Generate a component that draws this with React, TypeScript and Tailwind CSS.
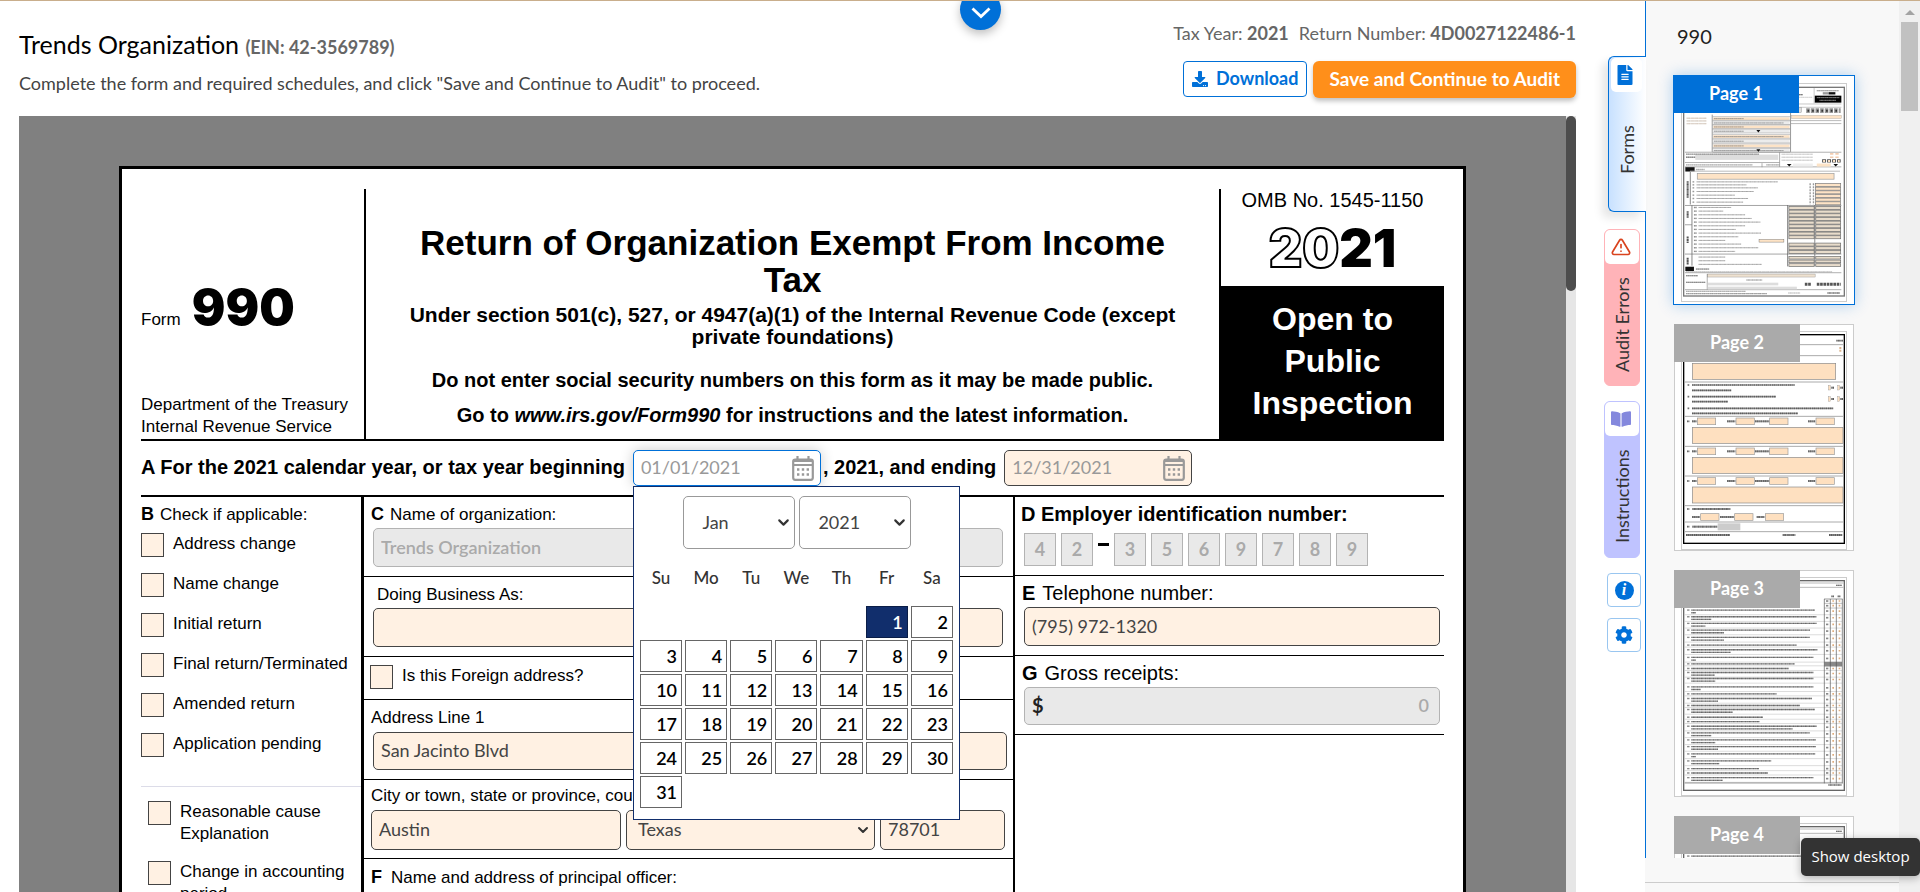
import React from "react";
import { ChevronDown } from "lucide-react";
import { FaDownload, FaCog, FaFileAlt, FaBookOpen } from "react-icons/fa";
import { FiAlertTriangle } from "react-icons/fi";

const sans = "font-['Liberation_Sans',Arial,sans-serif]";
const ui = "font-['Lato',sans-serif]";

function CalendarIcon() {
  return (
    <svg viewBox="0 0 22 25" className="h-[25px] w-[22px] shrink-0" fill="none" stroke="#999" aria-hidden="true">
      <rect x="1.2" y="3.5" width="19.6" height="20.3" rx="2" strokeWidth="2.2" />
      <path d="M1 5h20M1 9h20" strokeWidth="1.8" />
      <path d="M5.5 0v4M16.5 0v4" strokeWidth="2.2" />
      <path d="M5 13.5h12M5 18.5h12" strokeWidth="2.4" strokeDasharray="2.4 2.4" />
    </svg>
  );
}

function DateField({ label, value, active }: { label: string; value: string; active?: boolean }) {
  return (
    <div
      className={
        "flex h-9 w-[188px] items-center rounded-[5px] border pr-1.5 pl-[7px] " +
        (active ? "border-[#0070d8] bg-white shadow-[0_0_14px_rgba(0,0,0,0.2)]" : "border-[#444] bg-[#fff1e3]")
      }
    >
      <input
        aria-label={label}
        defaultValue={value}
        className={ui + " w-full min-w-0 bg-transparent pb-[2px] text-[18px] font-normal text-[#999] outline-none"}
      />
      <CalendarIcon />
    </div>
  );
}

const weekdays = ["Su", "Mo", "Tu", "We", "Th", "Fr", "Sa"];
const weeks: (number | null)[][] = [
  [null, null, null, null, null, 1, 2],
  [3, 4, 5, 6, 7, 8, 9],
  [10, 11, 12, 13, 14, 15, 16],
  [17, 18, 19, 20, 21, 22, 23],
  [24, 25, 26, 27, 28, 29, 30],
  [31, null, null, null, null, null, null],
];

function PickerSelect({ label, value }: { label: string; value: string }) {
  return (
    <div className="relative">
      <select
        aria-label={label}
        className="h-[53px] w-28 appearance-none rounded-[5px] border border-[#999] bg-white pl-[18px] text-[18px] font-normal text-[#444]"
      >
        <option>{value}</option>
      </select>
      <ChevronDown className="pointer-events-none absolute top-[18px] right-[3px] size-[17px] text-[#333]" strokeWidth={3} />
    </div>
  );
}

function DatePicker() {
  return (
    <div className={ui + " absolute top-9 left-0 z-10 h-[334px] w-[327px] border border-[#112e6c] bg-white px-[3px] pt-[9px]"}>
      <div className="flex justify-center gap-1 pl-[2px]">
        <PickerSelect label="Month" value="Jan" />
        <PickerSelect label="Year" value="2021" />
      </div>
      <table className="mt-[9px] w-full table-fixed border-separate border-spacing-x-[3px] border-spacing-y-[2px]">
        <thead>
          <tr>
            {weekdays.map((d) => (
              <th key={d} className="h-11 pb-2 text-center text-[17px] font-medium text-[#333]">
                {d}
              </th>
            ))}
          </tr>
        </thead>
        <tbody>
          {weeks.map((week, i) => (
            <tr key={i}>
              {week.map((day, j) => (
                <td key={j} className="h-8 p-0">
                  {day !== null && (
                    <button
                      className={
                        "block h-8 w-full border pr-1 text-right text-[18px] leading-[28px] font-semibold " +
                        (day === 1 ? "border-[#0a1d47] bg-[#112e6c] text-white" : "border-[#666] bg-white text-black")
                      }
                    >
                      {day}
                    </button>
                  )}
                </td>
              ))}
            </tr>
          ))}
        </tbody>
      </table>
    </div>
  );
}

function Check({ label }: { label: string }) {
  return (
    <label className="flex items-start gap-[9px] text-[17px] leading-[22px]">
      <input
        type="checkbox"
        className="h-6 w-[23px] shrink-0 appearance-none border border-[#444] bg-[#fff1e3] checked:bg-[#0070d8]"
      />
      <span>{label}</span>
    </label>
  );
}

const box = ui + " rounded-[5px] border px-[7px] pb-[2px] text-[18px] ";
const editable = box + "border-[#444] bg-[#fff1e3] text-[#444]";
const locked = box + "border-[#b3b3b3] bg-[#e9e9e9] font-semibold text-[#aaa]";

const changes = [
  "Address change",
  "Name change",
  "Initial return",
  "Final return/Terminated",
  "Amended return",
  "Application pending",
];

function FormSheet() {
  return (
    <div className={sans + " mx-[100px] mt-[50px] border-[3px] border-black bg-white px-[19px] pt-5 text-black"}>
      <div className="grid h-[252px] grid-cols-[225px_1fr_225px] border-b-2 border-black">
        <div className="flex flex-col justify-between border-r-2 border-black">
          <div className="flex items-baseline gap-[9px] pt-[86px]">
            <span className="text-[17px]">Form</span>
            <span className="pl-[2px] font-['Inter',sans-serif] text-[50px] leading-[64px] font-black">990</span>
          </div>
          <p className="pb-px text-[17px] leading-[22px] whitespace-nowrap">
            Department of the Treasury
            <br />
            Internal Revenue Service
          </p>
        </div>
        <div className="px-9 pt-[35px] text-center font-bold">
          <h2 className="text-[35px] leading-[37px]">Return of Organization Exempt From Income Tax</h2>
          <p className="mt-[6px] text-[21px] leading-[22px]">
            Under section 501(c), 527, or 4947(a)(1) of the Internal Revenue Code (except private foundations)
          </p>
          <p className="mt-[15px] text-[20px] leading-[35px]">
            Do not enter social security numbers on this form as it may be made public.
            <br />
            Go to <em>www.irs.gov/Form990</em> for instructions and the latest information.
          </p>
        </div>
        <div className="flex flex-col border-l-2 border-black">
          <p className="text-center text-[20px] leading-[22px]">OMB No. 1545-1150</p>
          <p className="flex h-[75px] items-center justify-center font-['Inter',sans-serif] text-[52px] font-black">
            <span className="text-white [-webkit-text-stroke:2px_black]">20</span>
            <span>21</span>
          </p>
          <p className="flex flex-1 items-center justify-center bg-black px-8 pb-[3px] text-center text-[32px] leading-[42px] font-bold text-white">
            Open to Public Inspection
          </p>
        </div>
      </div>

      <div className="flex h-14 items-center border-b-2 border-black text-[20px] font-bold">
        <span className="pr-2 pb-[3px] whitespace-nowrap">A For the 2021 calendar year, or tax year beginning</span>
        <div className="relative">
          <DateField label="Tax year beginning" value="01/01/2021" active />
          <DatePicker />
        </div>
        <span className="pr-2 pb-[3px] pl-[2px] whitespace-nowrap">, 2021, and ending</span>
        <DateField label="Tax year ending" value="12/31/2021" />
      </div>

      <div className="grid grid-cols-[223px_1fr_431px]">
        <div className="border-r-[3px] border-black pb-10">
          <p className="pt-1.5 pb-[7px] text-[17px] leading-[22px]">
            <b className="pr-1.5 text-[18px]">B</b>Check if applicable:
          </p>
          <div className="flex flex-col gap-4">
            {changes.map((c) => (
              <Check key={c} label={c} />
            ))}
          </div>
          <div className="mt-[29px] flex flex-col gap-4 border-t border-[#dcdce8] pt-[14px] pl-[7px]">
            <Check label="Reasonable cause Explanation" />
            <Check label="Change in accounting period" />
          </div>
        </div>

        <div className="text-[17px] leading-[22px]">
          <div className="h-20 border-b border-black pt-1.5 pl-[7px]">
            <label htmlFor="org">
              <b className="pr-1.5 text-[18px]">C</b>Name of organization:
            </label>
            <input id="org" disabled defaultValue="Trends Organization" className={locked + " mt-[2px] ml-[2px] block h-[39px] w-[630px]"} />
          </div>
          <div className="h-20 border-b border-black pt-[7px] pl-[9px]">
            <label htmlFor="dba" className="pl-1">
              Doing Business As:
            </label>
            <input id="dba" className={editable + " mt-[2px] block h-[39px] w-[630px]"} />
          </div>
          <div className="h-[43px] border-b border-black pt-2 pl-1.5">
            <Check label="Is this Foreign address?" />
          </div>
          <div className="h-20 border-b border-black pt-[7px] pl-[7px]">
            <label htmlFor="addr">Address Line 1</label>
            <input id="addr" defaultValue="San Jacinto Blvd" className={editable + " mt-[3px] ml-[2px] block h-[38px] w-[634px]"} />
          </div>
          <div className="h-[79px] border-b border-black pt-[5px] pl-[7px]">
            <p className="pb-[3px]">City or town, state or province, country, and ZIP code:</p>
            <div className="flex gap-[5px]">
              <input aria-label="City" defaultValue="Austin" className={editable + " h-10 w-[250px]"} />
              <div className="relative">
                <select aria-label="State" className={editable + " h-10 w-[249px] appearance-none pl-[11px]"}>
                  <option>Texas</option>
                </select>
                <ChevronDown className="pointer-events-none absolute top-3 right-1 size-4 text-[#333]" strokeWidth={3} />
              </div>
              <input aria-label="ZIP code" defaultValue="78701" className={editable + " h-10 w-[125px]"} />
            </div>
          </div>
          <div className="pt-[7px] pb-10 pl-[7px]">
            <b className="pr-[9px] text-[18px]">F</b>Name and address of principal officer:
          </div>
        </div>

        <div className="border-l-2 border-black text-[20px] leading-[22px]">
          <div className="h-[79px] border-b border-black pt-1.5 pl-1.5">
            <p className="font-bold">D Employer identification number:</p>
            <div className="flex items-start gap-[5px] pt-2 pl-[3px]">
              {"42-3569789".split("").map((c, i) =>
                c === "-" ? (
                  <span key={i} className="mt-[10px] h-[3px] w-[11px] bg-black" />
                ) : (
                  <input
                    key={i}
                    aria-label={"EIN digit " + (i + 1)}
                    disabled
                    defaultValue={c}
                    className={ui + " h-[33px] w-8 border border-[#b3b3b3] bg-[#e9e9e9] pb-[2px] text-center text-[18px] font-bold text-[#aaa]"}
                  />
                ),
              )}
            </div>
          </div>
          <div className="h-20 border-b border-black pt-1.5 pr-1 pl-[7px]">
            <label htmlFor="tel">
              <b className="pr-[7px]">E</b>Telephone number:
            </label>
            <div className="pt-[3px] pl-[2px]">
              <input id="tel" defaultValue="(795) 972-1320" className={editable + " block h-[39px] w-full"} />
            </div>
          </div>
          <div className="h-[79px] border-b border-black pt-1.5 pr-1 pl-[7px]">
            <label htmlFor="gross">
              <b className="pr-[7px]">G</b>Gross receipts:
            </label>
            <div className="pt-[3px] pl-[2px]">
              <div className={locked + " flex h-[38px] items-center"}>
                <span className="text-[20px] font-bold text-[#222]">$</span>
                <input id="gross" disabled defaultValue="0" className="w-full min-w-0 bg-transparent pr-[3px] text-right" />
              </div>
            </div>
          </div>
        </div>
      </div>
    </div>
  );
}

/* ---------- page thumbnails ---------- */

type LineProps = { x: number; y: number; w: number; c?: string; h?: number };
function Scribble({ x, y, w, c = "#999", h = 4 }: LineProps) {
  return (
    <g stroke={c} strokeWidth={h}>
      <path d={`M${x} ${y}h${w}`} opacity="0.45" />
      <path d={`M${x} ${y}h${w}`} strokeDasharray="3 2 5 3 2 2 4 3" opacity="0.4" />
    </g>
  );
}

function PageOneArt() {
  const peach = "#fde3c6";
  return (
    <svg viewBox="309 132 488 634" className="h-[211px] w-[162px]" preserveAspectRatio="none" aria-hidden="true">
      <rect x="311" y="136" width="484" height="627" fill="#fff" stroke="#777" strokeWidth="4" />
      <path d="M704 138v46M315 186H786M315 196H786" stroke="#aaa" strokeWidth="2" />
      <Scribble x={640} y={158} w={30} c="#333" />
      <Scribble x={640} y={166} w={58} c="#bbb" h={3} />
      <Scribble x={712} y={146} w={66} c="#777" />
      <path d="M730 154h18" stroke="#999" strokeWidth="7" />
      <path d="M748 154h20" stroke="#111" strokeWidth="7" />
      <rect x="706" y="161" width="80" height="21" fill="#000" />
      <Scribble x={712} y={167} w={68} c="#ccc" h={3} />
      <Scribble x={720} y={175} w={50} c="#ccc" h={3} />
      <rect x="636" y="197" width="30" height="15" fill="#ddd" stroke="#777" />
      <path d="M680 206h104" stroke="#999" strokeWidth="14" strokeDasharray="11 3" />
      <path d="M684 206h98" stroke="#333" strokeWidth="6" strokeDasharray="5 9" />
      <rect x="636" y="220" width="150" height="10" fill={peach} stroke="#999" />
      <path d="M634 236H786M634 245H786" stroke="#bbb" strokeWidth="3" />
      {[229, 237, 245].map((y) => (
        <Scribble key={y} x={320} y={y} w={60} c="#c8b8a8" />
      ))}
      <path d="M397 218V330M633 190V330" stroke="#666" strokeWidth="2" />
      {[226, 239, 251, 264, 280, 294, 308, 322].map((y, i) => (
        <g key={y}>
          <rect x="400" y={y} width="230" height="8" fill={i % 2 === 0 ? peach : "#ececec"} />
          <path d={`M398 ${y - 2}H632M398 ${y + 9}H632`} stroke="#999" strokeWidth="1.6" />
          <Scribble x={402} y={y + 4} w={i % 3 === 1 ? 210 : 90} c="#777" h={3} />
        </g>
      ))}
      <path d="M530 264l6 8 6-8zM530 322l6 8 6-8z" fill="#111" />
      <path d="M315 331H786M315 375H786" stroke="#888" strokeWidth="2" />
      <rect x="346" y="338" width="250" height="16" fill="#ddd" />
      <Scribble x={318} y={337} w={220} c="#777" />
      <Scribble x={318} y={346} w={28} c="#444" />
      <path d="M315 362H600M600 331v44M547 364v12" stroke="#888" strokeWidth="2" />
      <Scribble x={318} y={369} w={200} c="#888" />
      <Scribble x={560} y={369} w={40} c="#888" />
      {[337, 346, 355].map((y) => (
        <Scribble key={y} x={606} y={y} w={94} c="#aaa" h={3} />
      ))}
      <path d="M752 336h32M752 346h32" stroke="#f3cdb0" strokeWidth="5" strokeDasharray="10 6" />
      <path d="M728 357h56" stroke="#555" strokeWidth="10" strokeDasharray="12 3" />
      <path d="M731 357h50" stroke={peach} strokeWidth="6" strokeDasharray="6 9" />
      <path d="M622 366h14l-7 8zM762 366h14l-7 8z" fill="#111" />
      <rect x="640" y="365" width="60" height="9" fill="#eee" />
      <rect x="712" y="365" width="42" height="9" fill={peach} />
      <rect x="316" y="376" width="28" height="13" fill="#111" />
      <Scribble x={348} y={383} w={26} c="#888" />
      <path d="M330 388H782" stroke="#bbb" strokeWidth="3" />
      <rect x="352" y="395" width="412" height="17" fill={peach} stroke="#999" strokeWidth="2" />
      <path d="M331 390V488M336 490V640M336 640V672" stroke="#888" strokeWidth="3" />
      <path d="M323 418v50M323 508v20M323 584v20M323 648v20" stroke="#555" strokeWidth="6" strokeDasharray="5 1 8 1" />
      {[420, 429, 438, 449, 460, 470, 481].map((y, i) => (
        <g key={y}>
          <Scribble x={338} y={y} w={5} c="#555" />
          <Scribble x={350} y={y} w={[245, 150, 185, 172, 115, 155, 140][i]} c="#777" h={3} />
        </g>
      ))}
      <path d="M692 424V488M702 424V488" stroke="#999" strokeWidth="4" strokeDasharray="6 3" />
      {[425, 436, 447, 458, 469, 480].map((y) => (
        <rect key={y} x="708" y={y} width="76" height="9" fill={peach} stroke="#777" strokeWidth="2" />
      ))}
      <path d="M315 491H786M315 549H336M315 637H786" stroke="#777" strokeWidth="2" />
      {Array.from({ length: 13 }, (_, i) => 497 + i * 11).map((y, i) => (
        <g key={y}>
          <Scribble x={342} y={y} w={8} c="#555" />
          <Scribble x={356} y={y} w={[98, 74, 140, 160, 186, 140, 112, 188, 120, 80, 128, 180, 110][i]} c="#777" h={3} />
          {i !== 9 && (
            <>
              <rect x="628" y={y - 3} width="76" height="9" fill="#e8dccb" stroke="#666" strokeWidth="2" />
              <rect x="709" y={y - 3} width="75" height="9" fill="#e8dccb" stroke="#666" strokeWidth="2" />
            </>
          )}
        </g>
      ))}
      <rect x="538" y="593" width="75" height="8" fill={peach} stroke="#444" />
      <path d="M624 490V674M706 490V674" stroke="#555" strokeWidth="2" />
      {[646, 657, 668].map((y) => (
        <g key={y}>
          <Scribble x={356} y={y} w={y === 668 ? 190 : 80} c="#777" h={3} />
          <rect x="628" y={y - 2} width="76" height="8" fill="#e8dccb" stroke="#666" strokeWidth="2" />
          <rect x="709" y={y - 2} width="75" height="8" fill="#e8dccb" stroke="#666" strokeWidth="2" />
        </g>
      ))}
      <rect x="316" y="675" width="26" height="13" fill="#111" />
      <Scribble x={348} y={682} w={40} c="#555" />
      <Scribble x={318} y={690} w={440} c="#aaa" h={3} />
      <rect x="382" y="697" width="325" height="9" fill="#eee1d0" stroke="#777" />
      <path d="M315 693H786M382 697V744M315 744H786" stroke="#888" strokeWidth="2" />
      <Scribble x={318} y={702} w={36} c="#555" />
      <Scribble x={318} y={722} w={58} c="#555" />
      <Scribble x={500} y={715} w={48} c="#888" />
      <rect x="384" y="723" width="212" height="8" fill="#ddd" />
      <rect x="384" y="735" width="268" height="8" fill="#ddd" />
      <path d="M676 728h20M712 728h72" stroke="#555" strokeWidth="9" strokeDasharray="8 2" />
      <Scribble x={318} y={749} w={180} c="#777" h={3} />
      <Scribble x={318} y={756} w={244} c="#555" h={3} />
      <Scribble x={626} y={754} w={36} c="#999" h={3} />
      <Scribble x={744} y={754} w={38} c="#333" h={4} />
    </svg>
  );
}

function PageTwoArt() {
  const peach = "#fee0c0";
  return (
    <svg viewBox="309 69 486 630" className="h-[210px] w-[162px]" preserveAspectRatio="none" aria-hidden="true">
      <rect x="311" y="71" width="482" height="626" fill="#fff" stroke="#000" strokeWidth="4" />
      <path d="M314 101H790M314 134H790" stroke="#aaa" strokeWidth="3" />
      <Scribble x={769} y={89} w={20} c="#222" h={5} />
      <path d="M781 108v16" stroke="#dcb690" strokeWidth="6" strokeDasharray="6 2" />
      <rect x="337" y="157" width="430" height="48" fill={peach} stroke="#888" strokeWidth="2" />
      <path d="M314 213H790" stroke="#aaa" strokeWidth="3" />
      {[
        [323, 336, 222, 308],
        [0, 336, 238, 118],
        [323, 336, 257, 252],
        [0, 336, 272, 108],
        [323, 336, 292, 424],
        [0, 336, 307, 318],
      ].map(([n, x, y, w]) => (
        <g key={y}>
          {n > 0 && <Scribble x={n} y={y} w={5} c="#111" h={5} />}
          <Scribble x={x} y={y} w={w} c="#111" h={5} />
        </g>
      ))}
      {[230, 264].map((y) => (
        <g key={y}>
          <rect x="745" y={y - 7} width="6" height="14" fill={peach} stroke="#888" />
          <rect x="773" y={y - 7} width="6" height="14" fill={peach} stroke="#888" />
          <Scribble x={754} y={y} w={8} c="#111" h={6} />
          <Scribble x={781} y={y} w={8} c="#111" h={6} />
        </g>
      ))}
      {[331, 421, 510].map((y) => (
        <g key={y}>
          <path d={`M314 ${y - 15}H790`} stroke="#aaa" strokeWidth="3" />
          <Scribble x={321} y={y} w={7} c="#222" h={5} />
          <Scribble x={336} y={y} w={14} c="#222" h={6} />
          <Scribble x={441} y={y} w={25} c="#222" h={6} />
          <Scribble x={525} y={y} w={43} c="#222" h={6} />
          <Scribble x={684} y={y} w={22} c="#222" h={6} />
          {[352, 468, 569, 708].map((x) => (
            <rect key={x} x={x} y={y - 10} width="55" height="20" fill={peach} stroke="#999" strokeWidth="2" />
          ))}
          <rect x="337" y={y + 18} width="452" height="48" fill={peach} stroke="#888" strokeWidth="2" />
        </g>
      ))}
      <path d="M314 584H790M314 633H790M314 662H790" stroke="#aaa" strokeWidth="3" />
      <Scribble x={321} y={594} w={7} c="#222" h={5} />
      <Scribble x={337} y={594} w={114} c="#222" h={6} />
      {[336, 420, 530].map((x) => (
        <Scribble key={x} x={x} y={618} w={x === 420 ? 42 : 24} c="#222" h={6} />
      ))}
      {[362, 464, 556].map((x) => (
        <rect key={x} x={x} y="608" width="55" height="20" fill={peach} stroke="#999" strokeWidth="2" />
      ))}
      <Scribble x={321} y={647} w={7} c="#222" h={5} />
      <Scribble x={337} y={647} w={75} c="#222" h={6} />
      <rect x="413" y="637" width="68" height="21" fill="#ccc" />
      <Scribble x={318} y={672} w={132} c="#111" h={6} />
      <Scribble x={608} y={672} w={38} c="#222" h={6} />
      <Scribble x={747} y={672} w={40} c="#111" h={6} />
    </svg>
  );
}

const questionRows: [number, number, number][] = [
  [148, 370, 14], [168, 375, 60], [188, 376, 42], [208, 356, 98], [230, 355, 98], [250, 316, 0], [267, 378, 118],
  [290, 366, 14], [306, 310, 0], [320, 292, 0], [335, 366, 70], [353, 366, 72], [378, 366, 28], [396, 256, 0],
  [413, 362, 80], [431, 326, 0], [446, 370, 124], [466, 215, 0], [479, 205, 0], [496, 376, 304], [516, 355, 60],
  [537, 374, 72], [557, 374, 80], [579, 372, 14], [600, 240, 84], [620, 203, 0], [633, 230, 0], [650, 366, 94],
];

function PageThreeArt() {
  return (
    <svg viewBox="309 55 486 632" className="h-[211px] w-[162px]" preserveAspectRatio="none" aria-hidden="true">
      <rect x="311" y="57" width="482" height="628" fill="#fff" stroke="#666" strokeWidth="4" />
      <path d="M314 64H790M314 77H790" stroke="#999" strokeWidth="2" />
      <Scribble x={768} y={71} w={18} c="#333" />
      <Scribble x={754} y={104} w={8} c="#222" h={5} />
      <Scribble x={773} y={104} w={8} c="#222" h={5} />
      {questionRows.map(([y, a, b]) => (
        <g key={y}>
          <path d={`M314 ${y + (b ? 11 : 6)}H786`} stroke="#bbb" strokeWidth="1.5" />
          <Scribble x={322} y={y - (b ? 3 : 0)} w={6} c="#222" />
          <Scribble x={334} y={y - (b ? 3 : 0)} w={a} c="#222" />
          {b > 0 && <Scribble x={334} y={y + 5} w={b} c="#222" />}
          <path d={`M738 ${y}h7`} stroke="#888" strokeWidth="5" />
          <path d={`M757 ${y}h5M776 ${y}h5`} stroke="#dfae80" strokeWidth="5" />
        </g>
      ))}
      {[118, 132].map((y) => (
        <g key={y}>
          <path d={`M738 ${y}h7`} stroke="#888" strokeWidth="5" />
          <path d={`M757 ${y}h5M776 ${y}h5`} stroke="#dfae80" strokeWidth="5" />
          <path d={`M733 ${y + 7}h54`} stroke="#888" strokeWidth="1.5" />
        </g>
      ))}
      <rect x="733" y="300" width="53" height="14" fill="#888" />
      <path d="M733 112V664M751 112V664M769 112V664M787 112V664" stroke="#555" strokeWidth="2" />
      <path d="M732 112H788M314 663H788" stroke="#666" strokeWidth="2" />
      <Scribble x={745} y={669} w={40} c="#222" />
    </svg>
  );
}

function PageCard({ label, active, children }: { label: string; active?: boolean; children: React.ReactNode }) {
  return (
    <button
      className={
        "relative block shrink-0 border bg-white " +
        (active
          ? "-mx-px h-[230px] w-[182px] border-[#0070d8] pt-1 pl-[7px] shadow-[0_0_14px_rgba(0,112,216,0.3)]"
          : "mt-[19px] h-[227px] w-[180px] border-[#ccc] pt-1.5 pl-1.5")
      }
    >
      <span className="flex h-[219px] w-[166px] justify-center border border-[#ccc] pt-[2px]">{children}</span>
      <span
        className={
          "absolute -top-px -left-px flex h-[38px] w-[126px] items-center justify-center pb-[2px] text-[18px] font-bold text-white " +
          (active ? "bg-[#0070d8]" : "bg-[#aaa]")
        }
      >
        {label}
      </span>
    </button>
  );
}

function SideTab({ label, tone, icon }: { label: string; tone: string; icon: React.ReactNode }) {
  return (
    <button className={"flex flex-col items-center rounded-md border text-[#333] " + tone}>
      <span className="flex h-[34px] w-full shrink-0 items-center justify-center rounded-[5px] bg-white pr-[3px]">{icon}</span>
      <span className="flex flex-1 rotate-180 items-center justify-center text-[18px] leading-5 [writing-mode:vertical-rl]">
        {label}
      </span>
    </button>
  );
}

export default function App() {
  return (
    <div className={ui + " relative flex h-screen overflow-hidden border-t border-[#c9ae8c] bg-white"}>
      <button
        aria-label="Expand header"
        className="absolute -top-3 left-1/2 z-20 flex size-[41px] items-center justify-center rounded-full bg-[#0070d8] text-white shadow-[0_4px_10px_rgba(0,0,0,0.25)]"
      >
        <svg viewBox="0 0 20 12" className="mt-1.5 h-3 w-5" fill="none" stroke="currentColor" strokeWidth="2.8" aria-hidden="true">
          <path d="M1.5 1.5L10 9.5l8.5-8" />
        </svg>
      </button>

      <main className="flex min-w-0 flex-1 flex-col pl-[19px]">
        <header className="flex h-[115px] shrink-0 justify-between">
          <div className="pt-[25px]">
            <h1 className="text-[25px] leading-9 text-black">
              Trends Organization <span className="text-[18px] font-bold text-[#666]">(EIN: 42-3569789)</span>
            </h1>
            <p className="mt-1.5 text-[18px] leading-6 text-[#444]">
              Complete the form and required schedules, and click "Save and Continue to Audit" to proceed.
            </p>
          </div>
          <div className="flex flex-col items-end pt-5">
            <p className="text-[18px] leading-6 text-[#666]">
              Tax Year: <b>2021</b>
              <span className="pl-2.5">Return Number: </span>
              <b>4D0027122486-1</b>
            </p>
            <div className="mt-4 flex gap-1.5">
              <button className="flex h-9 items-center gap-2 rounded-[4px] border border-[#0070d8] bg-white px-2 pb-px text-[18px] font-bold text-[#0070d8]">
                <FaDownload className="size-4" />
                Download
              </button>
              <button className="h-[37px] rounded-[6px] bg-[#ff8f1a] px-4 pb-px text-[19px] font-bold text-white shadow-[0_3px_5px_rgba(0,0,0,0.25)]">
                Save and Continue to Audit
              </button>
            </div>
          </div>
        </header>
        <div className="flex min-h-0 flex-1">
          <div className="min-w-0 flex-1 overflow-hidden bg-[#808080]">
            <FormSheet />
          </div>
          <div className="w-2.5 bg-[#e6e6e6]">
            <div className="h-[175px] rounded-[5px] bg-[#4d4d4d]" />
          </div>
        </div>
      </main>

      <nav aria-label="Panels" className="flex w-[69px] shrink-0 flex-col items-end pt-[55px]">
        <SideTab
          label="Forms"
          tone="relative h-[156px] w-[38px] -mr-px rounded-r-none border-r-0 border-[#0070d8] bg-linear-to-r from-[#c8e1ff] to-white pt-px pr-1 pb-1 pl-[2px] shadow-[-6px_6px_10px_rgba(0,0,0,0.1)]"
          icon={<FaFileAlt className="size-5 text-[#0070d8]" />}
        />
        <SideTab
          label="Audit Errors"
          tone="mt-[17px] mr-[5px] h-[157px] w-9 border-[#ffb3b8] bg-[#ffb3b8]"
          icon={<FiAlertTriangle className="size-5 text-[#d9431e]" />}
        />
        <SideTab
          label="Instructions"
          tone="mt-[15px] mr-[5px] h-[157px] w-9 border-[#bfc3ff] bg-[#bfc3ff]"
          icon={<FaBookOpen className="size-5 text-[#8488dd]" />}
        />
        <button aria-label="Information" className="mt-[15px] mr-1 flex size-[34px] items-center justify-center rounded-[4px] border border-[#99c6f0] bg-white">
          <span className="flex size-[19px] items-center justify-center rounded-full bg-[#0070d8] font-['Liberation_Serif',serif] text-[16px] leading-4 font-bold text-white italic">
            i
          </span>
        </button>
        <button aria-label="Settings" className="mt-[11px] mr-1 flex size-[34px] items-center justify-center rounded-[4px] border border-[#99c6f0] bg-white">
          <FaCog className="size-[18px] text-[#0070d8]" />
        </button>
      </nav>

      <aside className="flex w-[275px] shrink-0 bg-[#f8f8f8]">
        <div className="flex min-w-0 flex-1 flex-col">
          <div className="flex min-h-0 flex-1 flex-col overflow-hidden border-l border-[#0070d8] pl-7">
            <h2 className="h-[74px] shrink-0 pt-[21px] pl-[3px] text-[20px] leading-7 text-[#222]">990</h2>
            <PageCard label="Page 1" active>
              <PageOneArt />
            </PageCard>
            <PageCard label="Page 2">
              <PageTwoArt />
            </PageCard>
            <PageCard label="Page 3">
              <PageThreeArt />
            </PageCard>
            <PageCard label="Page 4">
              <PageThreeArt />
            </PageCard>
          </div>
          <div className="h-[25px] shrink-0 border-b border-[#ccc]" />
          <div className="h-[9px] shrink-0" />
        </div>
        <div className="flex w-[21px] flex-col items-center bg-[#f0f0f0] pt-[9px]">
          <svg viewBox="0 0 10 5" className="h-[5px] w-2.5" aria-hidden="true">
            <path d="M0 5L5 0l5 5z" fill="#a3a3a3" />
          </svg>
          <div className="mt-[7px] h-[89px] w-[17px] bg-[#c1c1c1]" />
        </div>
      </aside>

      <div
        role="tooltip"
        className="absolute right-0 bottom-4 z-20 flex h-[38px] w-[119px] items-center justify-center rounded-[5px] bg-[#333] pb-[2px] font-['Open_Sans',sans-serif] text-[15px] text-white shadow-[0_2px_8px_rgba(0,0,0,0.3)]"
      >
        Show desktop
      </div>
    </div>
  );
}
